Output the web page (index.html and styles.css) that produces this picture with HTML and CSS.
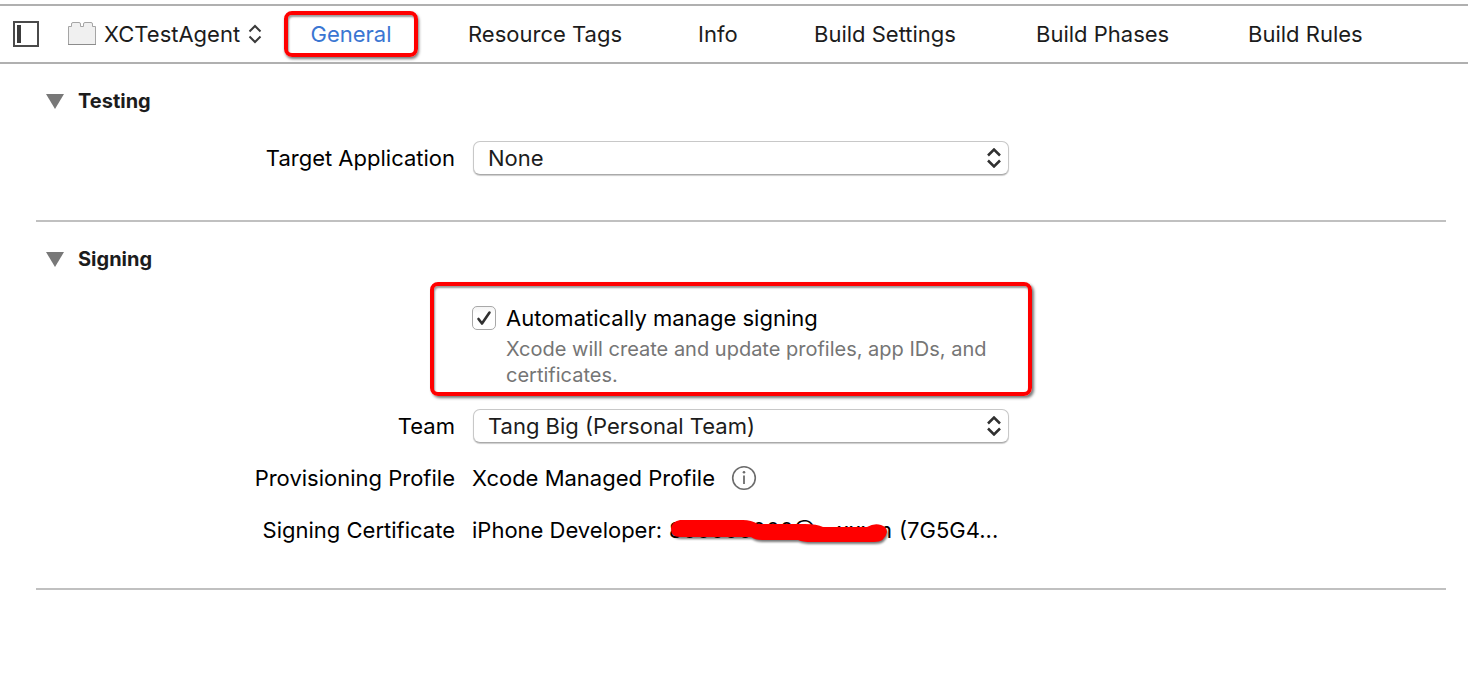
FILE: index.html
```html
<!DOCTYPE html>
<html lang="en">
<head>
<meta charset="utf-8">
<title>XCTestAgent</title>
<link rel="stylesheet" href="styles.css">
</head>
<body>
<header class="toolbar">
  <button class="icon-button sidebar-toggle" type="button" aria-label="Show targets list">
    <svg width="26" height="26" viewBox="0 0 26 26"><rect x="1" y="1" width="24" height="24" fill="#fff" stroke="#4a4a4a" stroke-width="2"/><rect x="4" y="4" width="4" height="18" fill="#3c3c3c"/></svg>
  </button>
  <button class="target-picker" type="button">
    <svg width="28" height="24" viewBox="0 0 28 24"><path d="M.5 22.500V4.500H3.500V2Q3.500 .5 5 .5H11Q12.500 .5 12.500 2V4.500H15.500V2Q15.500 .5 17 .5H23Q24.500 .5 24.500 2V4.500H27.500V22.500Z" fill="#f0f0f0" stroke="#a5a5a5"/><path d="M0 22.500H28" stroke="#8c8c8c"/></svg>
    <span>XCTestAgent</span>
    <svg width="14" height="20" viewBox="0 0 14 20" fill="none" stroke="#3a3a3a" stroke-width="2"><path d="M1.500 7.500L7 2L12.500 7.500M1.500 12.500L7 18L12.500 12.500"/></svg>
  </button>
  <nav class="tabs">
    <button class="tab tab-active" type="button">General</button>
    <button class="tab" type="button">Resource Tags</button>
    <button class="tab" type="button">Info</button>
    <button class="tab" type="button">Build Settings</button>
    <button class="tab" type="button">Build Phases</button>
    <button class="tab" type="button">Build Rules</button>
  </nav>
</header>
<main class="editor">
  <section class="section">
    <h2 class="heading"><button class="disclosure" type="button"><svg width="18" height="15" viewBox="0 0 18 15"><path d="M0 0H18L9 15Z" fill="#787878"/></svg><span>Testing</span></button></h2>
    <div class="row">
      <label class="label" for="app">Target Application</label>
      <div class="popup">
        <select id="app"><option>None</option></select>
        <svg class="arrows" width="14" height="20" viewBox="0 0 14 20" fill="none" stroke="#303030" stroke-width="2.500"><path d="M1 7.500L7 1.500L13 7.500M1 12.500L7 18.500L13 12.500"/></svg>
      </div>
    </div>
  </section>
  <section class="section signing">
    <h2 class="heading"><button class="disclosure" type="button"><svg width="18" height="15" viewBox="0 0 18 15"><path d="M0 0H18L9 15Z" fill="#787878"/></svg><span>Signing</span></button></h2>
    <div class="row">
      <div class="value highlight">
        <span class="check"><input id="auto" type="checkbox" checked aria-describedby="auto-note"><svg width="16" height="16" viewBox="0 0 16 16" fill="none" stroke="#303030" stroke-width="2.600" stroke-linecap="round" stroke-linejoin="round"><path d="M2.500 9L6 13.500L13.500 2.500"/></svg></span>
        <div class="check-text">
          <label for="auto">Automatically manage signing</label>
          <p class="note" id="auto-note">Xcode will create and update profiles, app IDs, and certificates.</p>
        </div>
      </div>
    </div>
    <div class="row team">
      <label class="label" for="team">Team</label>
      <div class="popup">
        <select id="team"><option>Tang Big (Personal Team)</option></select>
        <svg class="arrows" width="14" height="20" viewBox="0 0 14 20" fill="none" stroke="#303030" stroke-width="2.500"><path d="M1 7.500L7 1.500L13 7.500M1 12.500L7 18.500L13 12.500"/></svg>
      </div>
    </div>
    <div class="row info-row">
      <span class="label">Provisioning Profile</span>
      <div class="value profile">
        <span>Xcode Managed Profile</span>
        <button class="icon-button" type="button" aria-label="Profile details"><svg width="26" height="26" viewBox="0 0 26 26" fill="none" stroke="#6c6c6c"><circle cx="13" cy="13" r="11.300" stroke-width="1.600"/><path d="M13 10.500V19" stroke-width="1.800"/><circle cx="13" cy="7.300" r="1.300" fill="#6c6c6c" stroke="none"/></svg></button>
      </div>
    </div>
    <div class="row info-row">
      <span class="label">Signing Certificate</span>
      <div class="value certificate">
        <span>iPhone Developer:</span>
        <span class="redacted"><span class="account"><span>800000000@</span><span>xxxm</span></span>
          <svg class="marker" width="222" height="28" viewBox="0 0 222 28"><path d="M11 2H74Q82 2 89 6H136Q148 6 154 9H198Q205 5 212 7Q218 9 218 14Q216 24 205 24H142Q134 24 129 22H93Q86 22 82 19H11Q2 19 2 11Q2 4 11 2Z" fill="#f00"/></svg>
        </span>
        <span>(7G5G4...</span>
      </div>
    </div>
  </section>
</main>
</body>
</html>
```
FILE: styles.css
```css
* { box-sizing: border-box; }
body {
  margin: 0;
  padding-top: 4px;
  background: #fff;
  color: #000;
  font: 22px/26px Inter, "Liberation Sans", sans-serif;
}
button, select { font: inherit; color: inherit; }
button { padding: 0; border: 0; background: none; }
svg { display: block; flex: none; }
.toolbar {
  display: flex;
  align-items: center;
  height: 60px;
  padding-left: 13px;
  border-top: 2px solid #b0b0b0;
  border-bottom: 2px solid #b0b0b0;
  color: #1c1c1c;
  white-space: nowrap;
}
.target-picker {
  display: flex;
  align-items: center;
  gap: 8px;
  width: 216px;
  margin-left: 29px;
}
.tabs {
  display: grid;
  grid-template-columns: 158px 230px 116px 222px 212px auto;
  align-items: center;
}
.tab { padding: 0 26px; text-align: left; }
.tab-active {
  width: 134px;
  height: 46px;
  padding: 0;
  text-align: center;
  border: 4px solid #f00;
  border-radius: 8px;
  color: #3a76d2;
  box-shadow: 1px 2px 3px #0008, inset 1px 2px 2px #0006;
}
.editor { padding: 0 22px 0 36px; }
.section {
  padding: 24px 0 45px;
  border-bottom: 2px solid #c0c0c0;
}
.heading {
  margin: 0 0 27px;
  font-size: 20px;
  font-weight: 700;
  color: #1c1c1c;
}
.signing .heading { margin-bottom: 10px; }
.disclosure {
  display: flex;
  align-items: center;
  gap: 14px;
  padding-left: 10px;
}
.row {
  display: grid;
  grid-template-columns: 419px 537px;
  column-gap: 17px;
  align-items: center;
}
.label { text-align: right; }
.value { grid-column: 2; }
.popup { position: relative; padding-left: 1px; }
select {
  appearance: none;
  display: block;
  width: 100%;
  height: 34px;
  padding: 0 40px 0 14px;
  border: 1px solid #c8c8c8;
  border-bottom-color: #aaa;
  border-radius: 7px;
  background: #fff;
  color: #1c1c1c;
  box-shadow: 0 1px 1px #0003;
}
.arrows {
  position: absolute;
  top: 7px;
  right: 8px;
  pointer-events: none;
}
.highlight {
  display: flex;
  gap: 10px;
  margin: 0 -23px 0 -42px;
  padding: 19px 24px 4px 38px;
  border: 4px solid #f00;
  border-radius: 8px;
  box-shadow: 2px 2px 3px #0008, inset 1px 2px 2px #0006;
}
.check { position: relative; height: 24px; margin-top: 1px; }
.check input {
  appearance: none;
  display: block;
  width: 24px;
  height: 24px;
  margin: 0;
  border: 1px solid #a8a8a8;
  border-radius: 5px;
  background: linear-gradient(#f4f4f4, #fff 30%);
}
.check svg {
  position: absolute;
  top: 4px;
  left: 4px;
  pointer-events: none;
}
.check-text label { display: block; margin-bottom: 5px; }
.note {
  margin: 0;
  font-size: 20px;
  color: #757575;
}
.team { margin-top: 13px; margin-bottom: 22px; }
.info-row { margin-bottom: 26px; }
.info-row:last-child { margin-bottom: 0; }
.profile { display: flex; gap: 16px; }
.certificate { display: flex; gap: 7px; white-space: nowrap; }
.redacted { position: relative; width: 223px; }
.account { display: flex; justify-content: space-between; }
.marker {
  position: absolute;
  top: 1px;
  left: 0;
  filter: drop-shadow(1px 2px 1px #0008);
}
```
